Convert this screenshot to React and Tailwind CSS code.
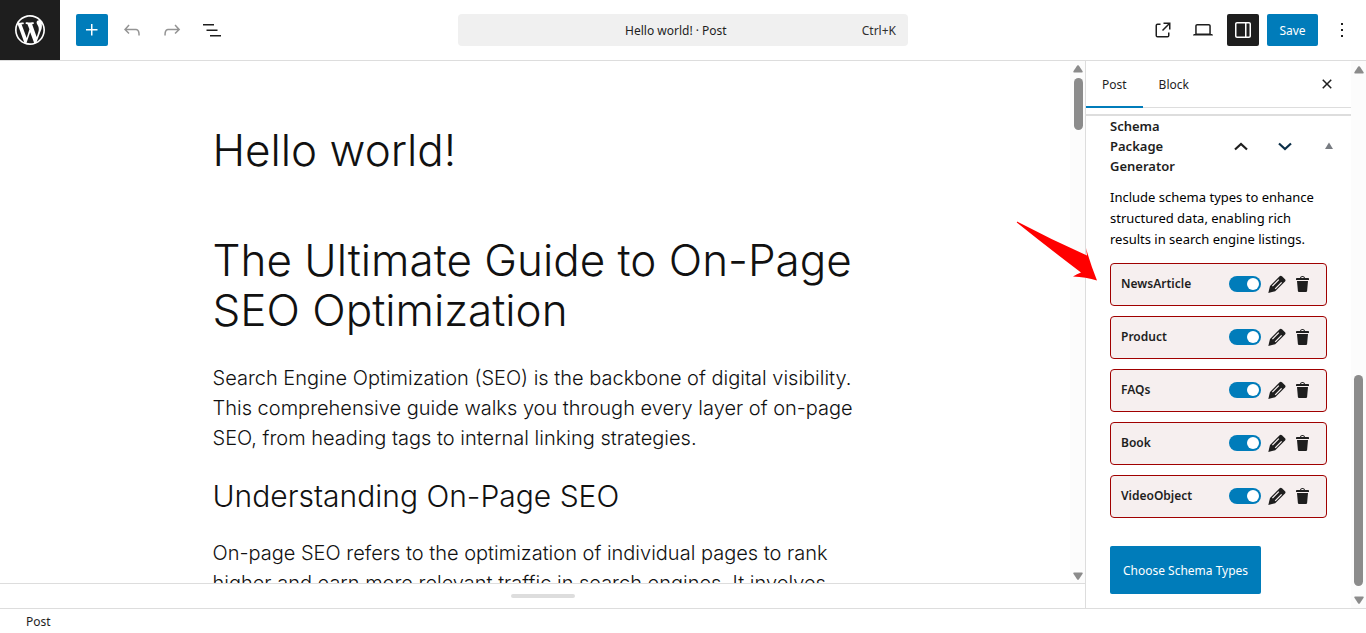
import React, { useState } from 'react';

const schemaTypes = ['NewsArticle', 'Product', 'FAQs', 'Book', 'VideoObject'];

const icons = {
    plus: 'M11 12.5V17.5H12.5V12.5H17.5V11H12.5V6H11V11H6V12.5H11Z',
    undo: 'M18.3 11.7c-.6-.6-1.4-.9-2.3-.9H6.7l2.9-3.3-1.1-1-4.5 5L8.5 16l1-1-2.7-2.7H16c.5 0 .9.2 1.3.5 1 1 1 3.4 1 4.5v.3h1.5v-.2c0-1.5 0-4.3-1.5-5.7z',
    redo: 'M15.6 6.5l-1.1 1 2.9 3.3H8c-.9 0-1.7.3-2.3.9-1.4 1.5-1.4 4.2-1.4 5.6v.2h1.5v-.3c0-1.1 0-3.5 1-4.5.3-.3.7-.5 1.3-.5h9.2L14.5 15l1.1 1.1 4.6-4.6-4.6-5z',
    overview: 'M3 6h11v1.5H3V6Zm3.5 5.5h11V13h-11v-1.5ZM21 17H10v1.5h11V17Z',
    external: 'M19.5 4.5h-7V6h4.44l-5.97 5.97 1.06 1.06L18 7.06v4.44h1.5v-7Zm-13 1a2 2 0 0 0-2 2v10a2 2 0 0 0 2 2h10a2 2 0 0 0 2-2v-3H17v3a.5.5 0 0 1-.5.5h-10a.5.5 0 0 1-.5-.5v-10a.5.5 0 0 1 .5-.5h3V5.5h-3Z',
    desktop: 'M20.5 16h-.7V8c0-1.1-.9-2-2-2H6.2c-1.1 0-2 .9-2 2v8h-.7c-.8 0-1.5.7-1.5 1.5h20c0-.8-.7-1.5-1.5-1.5zM5.7 8c0-.3.2-.5.5-.5h11.6c.3 0 .5.2.5.5v7.6H5.7V8z',
    drawer: 'M18 4H6c-1.1 0-2 .9-2 2v12c0 1.1.9 2 2 2h12c1.1 0 2-.9 2-2V6c0-1.1-.9-2-2-2zm-4 14.5H6c-.3 0-.5-.2-.5-.5V6c0-.3.2-.5.5-.5h8v13zm4.5-.5c0 .3-.2.5-.5.5h-2.5v-13H18c.3 0 .5.2.5.5v12z',
    more: 'M13 19h-2v-2h2v2zm0-6h-2v-2h2v2zm0-6h-2V5h2v2z',
    close: 'M12 13.06l3.712 3.713 1.061-1.06L13.061 12l3.712-3.712-1.06-1.06L12 10.938 8.288 7.227l-1.061 1.06L10.939 12l-3.712 3.712 1.06 1.061L12 13.061z',
};

const Icon = ({ name, className = '' }) => (
    <svg viewBox="0 0 24 24" fill="currentColor" className={`h-6 w-6 shrink-0 ${className}`} aria-hidden="true">
        <path d={icons[name]} />
    </svg>
);

const IconButton = ({ icon, label, className = '' }) => (
    <button
        type="button"
        aria-label={label}
        className={`flex h-8 w-8 shrink-0 items-center justify-center rounded-xs ${className}`}
    >
        <Icon name={icon} />
    </button>
);

const WordPressLogo = () => (
    <svg viewBox="-2 -2 24 24" fill="currentColor" className="h-9 w-9" aria-hidden="true">
        <path d="M20 10c0-5.51-4.49-10-10-10C4.48 0 0 4.49 0 10c0 5.52 4.48 10 10 10 5.51 0 10-4.48 10-10zM7.78 15.37L4.37 6.22c.55-.02 1.17-.08 1.17-.08.5-.06.44-1.13-.06-1.11 0 0-1.45.11-2.37.11-.18 0-.37 0-.58-.01C4.12 2.69 6.87 1.11 10 1.11c2.33 0 4.45.87 6.05 2.34-.68-.11-1.65.39-1.65 1.58 0 .74.45 1.36.9 2.1.35.61.55 1.36.55 2.46 0 1.49-1.4 5-1.4 5l-3.03-8.37c.54-.02.82-.17.82-.17.5-.05.44-1.25-.06-1.22 0 0-1.44.12-2.38.12-.87 0-2.33-.12-2.33-.12-.5-.03-.56 1.2-.06 1.22l.92.08 1.26 3.41zM17.41 10c.24-.64.74-1.87.43-4.25.7 1.29 1.05 2.71 1.05 4.25 0 3.29-1.73 6.24-4.4 7.78.97-2.59 1.94-5.2 2.92-7.78zM6.1 18.09C3.12 16.65 1.11 13.53 1.11 10c0-1.3.23-2.48.72-3.59C3.25 10.3 4.67 14.2 6.1 18.09zm4.03-6.63l2.58 6.98c-.86.29-1.76.45-2.71.45-.79 0-1.57-.11-2.29-.33.81-2.38 1.62-4.74 2.42-7.1z" />
    </svg>
);

const Header = () => (
    <header className="flex h-[61px] shrink-0 items-stretch border-b border-[#dddddd]">
        <div className="flex flex-1 items-center gap-2 pr-2">
            <a href="#posts" aria-label="View Posts" className="mr-2 flex w-[60px] items-center justify-center self-stretch bg-[#1e1e1e] text-white">
                <WordPressLogo />
            </a>
            <IconButton icon="plus" label="Block Inserter" className="bg-[#007cba] text-white" />
            <IconButton icon="undo" label="Undo" className="text-[#949494]" />
            <IconButton icon="redo" label="Redo" className="text-[#949494]" />
            <IconButton icon="overview" label="Document Overview" />
        </div>
        <div className="flex items-center">
            <button type="button" className="flex h-8 w-[450px] items-center rounded bg-[#f0f0f0] px-3 pt-px">
                <span className="flex-1 pl-5 text-center">Hello world! · Post</span>
                <span className="text-[#2f2f2f]">Ctrl+K</span>
            </button>
        </div>
        <div className="flex flex-1 items-center justify-end gap-2 pr-2">
            <IconButton icon="external" label="View Post" />
            <IconButton icon="desktop" label="View" />
            <IconButton icon="drawer" label="Settings" className="bg-[#1e1e1e] text-white" />
            <button type="button" className="h-8 min-w-[51px] rounded-xs bg-[#007cba] px-3 pt-[2px] text-white">Save</button>
            <IconButton icon="more" label="Options" />
        </div>
    </header>
);

// Track with arrows; thumb position is set by the caller
const ScrollTrack = ({ thumb, className = '' }) => (
    <div className={`flex w-[15px] shrink-0 flex-col items-center bg-[#fcfcfc] text-[#8b8b8b] ${className}`} aria-hidden="true">
        <svg viewBox="0 0 10 8" className="h-2 w-[10px] shrink-0" fill="currentColor">
            <path d="M4.2.6Q5-.3 5.8.6L9.6 6.2Q10 7.5 9 7.5H1Q0 7.5.4 6.2Z" />
        </svg>
        <div className="flex min-h-0 w-full flex-1 flex-col items-center">{thumb}</div>
        <svg viewBox="0 0 10 8" className="h-2 w-[10px] shrink-0" fill="currentColor">
            <path d="M4.2 7.4Q5 8.3 5.8 7.4L9.6 1.8Q10 .5 9 .5H1Q0 .5.4 1.8Z" />
        </svg>
    </div>
);

const Canvas = () => (
    <main className="flex min-h-0 flex-1">
        <article className="min-w-0 flex-1 overflow-hidden pt-16 text-[#111111] font-['Inter',sans-serif]">
            <div className="mx-auto w-[645px]">
                <h1 className="text-[44px] leading-[50px] font-light">Hello world!</h1>
                <h1 className="mt-[60px] text-[44px] leading-[50px] font-light">
                    The Ultimate Guide to On-Page SEO Optimization
                </h1>
                <p className="mt-7 text-[20px] leading-[30px] font-light">
                    Search Engine Optimization (SEO) is the backbone of digital visibility.
                    <br />
                    This comprehensive guide walks you through every layer of on-page
                    <br />
                    SEO, from heading tags to internal linking strategies.
                </p>
                <h2 className="mt-[25px] text-[30px] leading-[36px] font-light">Understanding On-Page SEO</h2>
                <p className="mt-6 text-[20px] leading-[30px] font-light">
                    On-page SEO refers to the optimization of individual pages to rank
                    <br />
                    higher and earn more relevant traffic in search engines. It involves
                </p>
            </div>
        </article>
        <ScrollTrack
            className="pt-1 pb-[3px] pl-px"
            thumb={<div className="mt-[5px] h-[52px] w-[9px] rounded-full bg-[#8b8b8b]" />}
        />
    </main>
);

const Chevron = ({ d, label, className }) => (
    <button type="button" aria-label={label} className={`flex h-6 w-6 items-center justify-center ${className}`}>
        <svg viewBox="0 0 14 9" className="h-[9px] w-[14px]" fill="none" stroke="currentColor" strokeWidth="2.2">
            <path d={d} />
        </svg>
    </button>
);

const SchemaRow = ({ name }) => {
    const [enabled, setEnabled] = useState(true);

    return (
        <li className="flex h-[43px] items-center rounded border border-[#a00000] bg-[#f6efef] pr-[13px] pb-px pl-[10px]">
            <label htmlFor={`schema-${name}`} className="flex-1 font-semibold">{name}</label>
            <input
                id={`schema-${name}`}
                type="checkbox"
                role="switch"
                checked={enabled}
                onChange={() => setEnabled(!enabled)}
                className="flex h-4 w-8 appearance-none items-center rounded-full bg-[#b0b0b0] px-[2px] before:h-3 before:w-3 before:rounded-full before:bg-white checked:justify-end checked:bg-[#007cba]"
            />
            <button type="button" aria-label={`Edit ${name}`} className="ml-[6px]">
                <svg viewBox="0 0 20 20" className="h-5 w-5" aria-hidden="true">
                    <path fill="currentColor" d="M12.6 2.2Q13.8 1.2 15.2 2.5L18 5.2Q19 6.4 18 7.6L8.2 17.2 1.3 19 3 12Z" />
                    <path fill="none" stroke="#f6efef" strokeWidth="1.3" d="M11.8 5.6 5.4 12.1M14.6 8.4 8.2 14.9" />
                </svg>
            </button>
            <button type="button" aria-label={`Delete ${name}`} className="ml-[6px]">
                <svg viewBox="0 0 20 20" fill="currentColor" className="h-5 w-5" aria-hidden="true">
                    <path d="M12 4h3c.6 0 1 .4 1 1v1H3V5c0-.6.5-1 1-1h3c.2-1.1 1.3-2 2.5-2s2.3.9 2.5 2zM8 4h3c-.2-.6-.9-1-1.5-1S8.2 3.4 8 4zM4 7h11l-.9 10.1c0 .5-.5.9-1 .9H5.9c-.5 0-.9-.4-1-.9L4 7z" />
                </svg>
            </button>
        </li>
    );
};

const Sidebar = () => (
    <aside className="flex w-[281px] shrink-0 border-l border-[#dddddd]">
        <div className="flex min-w-0 flex-1 flex-col">
            <div className="flex h-[47px] shrink-0 items-stretch border-b border-[#dddddd] pr-2">
                <button type="button" className="-mb-px border-b-2 border-[#007cba] px-4 pt-[2px]">Post</button>
                <button type="button" className="px-4 pt-px">Block</button>
                <div className="flex flex-1 items-center justify-end">
                    <IconButton icon="close" label="Close Settings" />
                </div>
            </div>
            <section className="mt-[6px] border-t-2 border-[#dddddd] pr-6 pl-6">
                <div className="flex items-center">
                    <h2 className="w-[84px] text-[13px] leading-5 font-semibold">Schema Package Generator</h2>
                    <Chevron label="Move up" d="M1 7.5 7 2l6 5.5" className="ml-[35px]" />
                    <Chevron label="Move down" d="M1 1.5 7 7l6-5.5" className="ml-5 text-[#0b2f48]" />
                    <button type="button" aria-label="Toggle panel" className="-mr-[7px] ml-auto text-[#787c82]">
                        <svg viewBox="0 0 10 8" className="h-2 w-[10px]" fill="currentColor">
                            <path d="M5 .5 9 7H1Z" />
                        </svg>
                    </button>
                </div>
                <p className="mt-[11px] text-[13px] leading-[21px] text-black">
                    Include schema types to enhance structured data, enabling rich results in search engine listings.
                </p>
                <ul className="mt-[13px] flex flex-col gap-[10px]">
                    {schemaTypes.map((name) => (
                        <SchemaRow key={name} name={name} />
                    ))}
                </ul>
                <button type="button" className="mt-7 h-12 min-w-[151px] rounded-xs bg-[#007cba] px-3 pt-px text-white">
                    Choose Schema Types
                </button>
            </section>
        </div>
        <ScrollTrack
            className="pt-[5px] pb-1"
            thumb={<div className="mt-auto mb-[10px] h-[211px] w-[9px] rounded-full bg-[#8b8b8b]" />}
        />
    </aside>
);

const App = () => (
    <div className="relative flex h-screen flex-col overflow-hidden bg-white text-[12px] text-[#1e1e1e] font-['Noto_Sans',sans-serif]">
        <Header />
        <div className="flex min-h-0 flex-1">
            <div className="flex min-w-0 flex-1 flex-col">
                <Canvas />
                <div className="flex h-[25px] shrink-0 items-center justify-center border-t border-[#dddddd]">
                    <div className="h-1 w-16 rounded-full bg-[#dddddd]" />
                </div>
            </div>
            <Sidebar />
        </div>
        <footer className="flex h-[25px] shrink-0 items-center border-t border-[#dddddd] px-[26px] pt-px">Post</footer>

        {/* Callout pointing at the first schema */}
        <svg viewBox="0 0 82 62" className="absolute top-[220px] right-[268px] h-[62px] w-[82px]" fill="#ff0000" aria-hidden="true">
            <path d="M1 1.5Q36 20 71 35.5L70 28Q74 43 81 60.5 70 57 57 56.500 61 54 65 52.500 30 26 .8 2.500Z" />
        </svg>
    </div>
);

export default App;
